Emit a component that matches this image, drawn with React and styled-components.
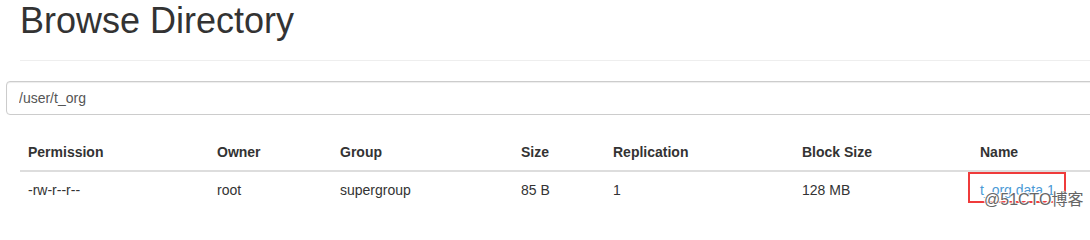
import React from "react";
import styled, { createGlobalStyle } from "styled-components";

const Global = createGlobalStyle`
  html, body { margin: 0; padding: 0; background: #fff; overflow: hidden; }
  body {
    font-family: "Liberation Sans", Arial, sans-serif;
    font-size: 14px;
    line-height: 20px;
    color: #333;
  }
`;

const Page = styled.div`
  position: relative;
  width: 1090px;
  height: 219px;
  overflow: hidden;
  display: flex;
  flex-direction: column;
`;

const PageHeader = styled.div`
  margin-left: 20px;
  width: 1100px;
  padding-bottom: 9px;
  border-bottom: 1px solid #eee;
`;

const Title = styled.h1`
  margin: 1px 0 10px;
  font-size: 36px;
  font-weight: 500;
  line-height: 1.1;
  color: #333;
`;

const PathInput = styled.input`
  box-sizing: border-box;
  margin: 20px 0 0 6px;
  width: 1100px;
  height: 34px;
  padding: 6px 12px;
  font-family: inherit;
  font-size: 14px;
  line-height: 20px;
  color: #555;
  background: #fff;
  border: 1px solid #ccc;
  border-radius: 4px;
  box-shadow: inset 0 1px 1px rgba(0, 0, 0, 0.075);
  outline: none;
`;

const Table = styled.table`
  margin: 19px 0 0 20px;
  width: 1100px;
  border-collapse: collapse;
  table-layout: fixed;
`;

const Th = styled.th`
  text-align: left;
  font-weight: bold;
  padding: 8px;
  line-height: 20px;
  border-bottom: 2px solid #ddd;
`;

const Td = styled.td`
  padding: 8px;
  line-height: 20px;
  vertical-align: top;
`;

const NameWrap = styled.span`
  position: relative;
  display: inline-block;
`;

const Link = styled.a`
  color: #4a9ad6;
  text-decoration: none;
`;

const Highlight = styled.span`
  position: absolute;
  left: -12px;
  top: -8px;
  width: 98px;
  height: 31px;
  box-sizing: border-box;
  border: 2px solid #ef3b3b;
  pointer-events: none;
`;

const Watermark = styled.div`
  position: absolute;
  left: 984px;
  top: 191px;
  font-family: "Liberation Sans", "Noto Sans CJK SC", sans-serif;
  font-size: 16px;
  line-height: 18px;
  color: #666;
  text-shadow: 0 0 1px #fff, 0 0 2px #fff, 1px 1px 0 #fff, -1px -1px 0 #fff;
  white-space: nowrap;
`;

const cols = [189, 123, 181, 92, 189, 178, 148];
const headers = ["Permission", "Owner", "Group", "Size", "Replication", "Block Size", "Name"];
const row = ["-rw-r--r--", "root", "supergroup", "85 B", "1", "128 MB"];

export default function App() {
  return (
    <>
      <Global />
      <Page>
        <PageHeader>
          <Title>Browse Directory</Title>
        </PageHeader>
        <PathInput defaultValue="/user/t_org" />
        <Table>
          <colgroup>
            {cols.map((w, i) => (
              <col key={i} style={{ width: w }} />
            ))}
          </colgroup>
          <thead>
            <tr>
              {headers.map((h) => (
                <Th key={h}>{h}</Th>
              ))}
            </tr>
          </thead>
          <tbody>
            <tr>
              {row.map((c, i) => (
                <Td key={i}>{c}</Td>
              ))}
              <Td>
                <NameWrap>
                  <Link href="#">t_org data 1</Link>
                  <Highlight />
                </NameWrap>
              </Td>
            </tr>
          </tbody>
        </Table>
        <Watermark>@51CTO博客</Watermark>
      </Page>
    </>
  );
}
